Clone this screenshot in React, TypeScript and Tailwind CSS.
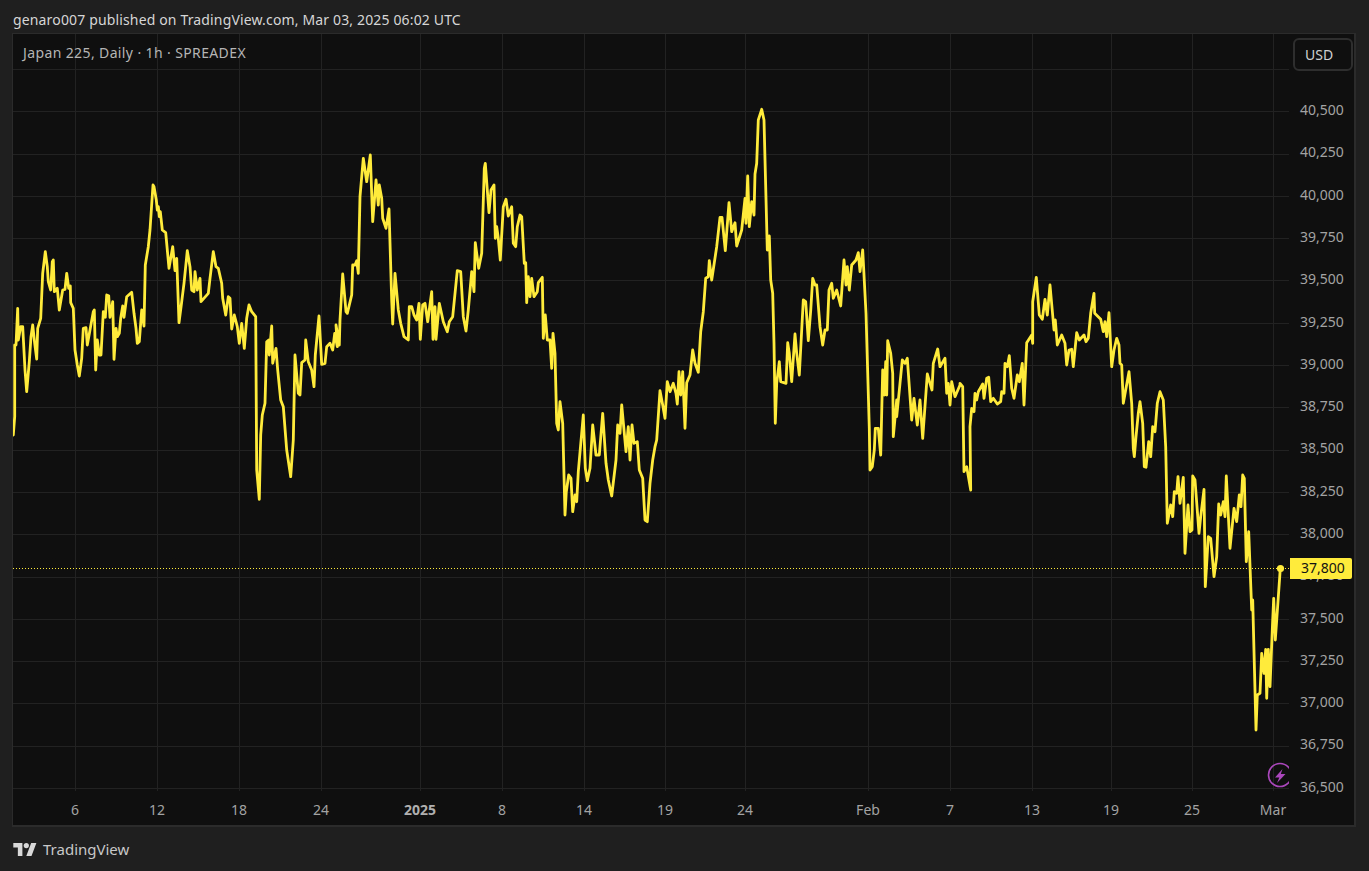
import React from "react";

type P = [number, number];
const seg = (ox: number, oy: number, pts: P[]): P[] => pts.map(([x, y]) => [ox + x / 3, oy + y / 3]);

const a: P[] = seg(0, 230, [
  [40,615],[44,560],[44,345],[48,345],[53,235],[55,330],[62,290],[68,290],[75,420],[80,485],[88,395],[93,320],[98,285],[104,340],[110,387],[113,295],[122,265],[128,130],[136,65],[142,110],[145,155],[152,180],[157,95],[160,90],[163,185],[172,175],[178,240],[188,180],[195,178],[200,130],[206,175],[211,168],[212,218],[220,235],[225,360],[232,405],[238,438],[245,385],[250,295],[258,293],[262,345],[270,300],[280,245],[283,240],[287,420],[292,330],[298,375],[303,375],[310,245],[316,262],[320,195],[326,197],[330,262],[338,215],[342,388],[348,295],[352,320],[358,310],[362,265],[368,228],[372,262],[380,200],[395,187],[402,250],[408,295],[412,340],[418,335],[425,240],[432,288],[436,105],[445,50],[450,0],
  [459,-135],[462,-130],[469,-90],[472,-60],[475,-70],[478,-40],[481,-55],[487,0],
  [497,8],[507,115],[518,50],[525,122],[530,85],[537,278],[545,215],[552,160],[562,62],[570,110],[575,180],[582,185],[585,125],[592,180],[600,145],[603,215],[625,190],[630,145],[640,65],[648,110],[655,115],[665,160],[668,205],[677,255],[685,200],[690,205],[695,297],[703,255],[712,290],[718,340],[725,280],[733,355],[740,265],[747,225],[755,245],[767,260],[770,720],[778,808],[782,615],[787,555],[795,520],[800,335],[806,330],[808,375],[815,288],[818,400],[828,355],[833,420],[842,510],[850,530],[860,660],[872,740],[880,630],[885,375],[895,490],[900,495],[905,398],[915,390],[917,330],[925,395],[935,420],[942,470],[946,375],[957,258],[965,403],[975,400],[980,350],[990,340],
]);
const b: P[] = seg(330, 140, [
  [0,610],[8,630],[14,580],[22,620],[18,555],[28,615],[30,540],[38,402],[48,515],[52,520],[65,465],[68,375],[75,375],[80,362],[85,400],[90,170],[100,55],[110,125],[121,45],[128,245],[138,120],[145,195],[148,135],[155,175],[158,235],[168,265],[177,207],[185,480],[188,552],[195,400],[205,510],[212,550],[222,590],[235,600],[238,500],[245,500],[252,525],[260,540],[267,490],[271,598],[278,495],[285,490],[293,545],[305,455],[309,598],[315,500],[318,598],[328,490],[340,545],[352,575],[358,545],[368,530],[382,392],[392,395],[400,530],[408,573],[415,510],[425,395],[432,455],[436,308],[446,385],[455,340],[463,85],[466,70],[477,218],[483,150],[492,135],[496,295],[500,260],[505,295],[511,360],[520,200],[528,178],[535,228],[545,200],[550,310],[557,320],[562,260],[570,225],[575,230],[583,370],[587,368],[590,488],[595,410],[600,470],[605,415],[612,470],[622,455],[625,428],[637,412],[640,595],[646,525],[652,600],[660,600],[665,685],[669,580],[675,640],[680,850],[685,870],[690,785],[698,850],[705,1125],[709,1055],[716,1005],[723,1015],[728,1115],[735,1065],[740,1085],[745,995],[760,825],[766,985],[772,1022],[780,985],[788,855],[798,945],[808,945],[818,820],[828,970],[835,1020],[845,1068],[858,960],[863,855],[870,880],[875,795],[888,935],[895,860],[900,960],[906,855],[912,910],[922,905],[928,990],[938,1015],[945,1140],[952,1145],
]);
const c: P[] = seg(640, 100, [
  [30,1150],[38,1080],[45,1040],[50,1020],[60,872],[68,915],[75,955],[82,845],[90,875],[100,850],[108,880],[112,912],[117,815],[122,885],[128,815],[135,985],[140,848],[150,825],[158,750],[165,790],[175,817],[182,695],[190,635],[197,535],[205,530],[208,482],[215,540],[230,440],[240,352],[246,352],[256,452],[267,308],[275,395],[285,368],[290,438],[305,390],[315,295],[318,370],[323,228],[328,380],[335,305],[342,345],[345,222],[350,190],[355,60],[365,28],[372,60],[382,450],[388,408],[392,540],[398,580],[402,730],[406,970],[410,850],[418,785],[422,845],[438,850],[443,728],[448,760],[455,845],[465,702],[470,760],[478,825],[490,600],[497,605],[505,722],[512,632],[518,535],[525,555],[530,555],[540,680],[548,735],[555,690],[562,690],[567,570],[575,550],[580,595],[590,570],[602,618],[612,480],[618,555],[622,500],[628,570],[635,495],[648,480],[655,458],[660,515],[668,450],[678,640],[688,985],[690,1110],[697,1100],[703,1050],[706,985],[715,985],[722,1065],[728,810],[733,885],[737,785],[740,885],[743,722],[752,760],[758,820],[760,1010],[770,900],[770,950],[780,850],[787,780],[795,790],[802,775],[815,960],[822,895],[832,975],[840,900],[848,1015],[862,822],[870,850],[876,870],[880,790],[893,747],[900,800],[915,775],[920,880],[925,850],[930,915],[935,845],[945,890],[960,855],
]);
const d: P[] = seg(960, 260, [
  [0,370],[8,380],[12,635],[20,620],[32,690],[30,500],[35,445],[42,455],[45,400],[50,420],[55,395],[68,372],[72,415],[80,355],[86,352],[92,425],[100,415],[112,432],[122,425],[125,395],[132,400],[135,310],[142,320],[148,287],[155,385],[162,415],[172,345],[178,365],[187,310],[192,435],[200,248],[215,225],[218,250],[218,125],[229,52],[238,165],[247,178],[255,118],[262,165],[270,75],[282,210],[286,180],[292,255],[305,225],[315,250],[320,315],[327,270],[335,268],[340,320],[350,218],[358,240],[372,225],[378,245],[385,235],[392,160],[402,100],[404,160],[422,178],[430,215],[435,185],[440,230],[447,158],[455,320],[462,270],[470,235],[477,255],[480,310],[485,315],[490,430],[507,335],[515,430],[520,565],[523,590],[528,530],[535,460],[540,425],[548,490],[553,620],[558,622],[566,545],[572,590],[578,500],[585,515],[592,430],[600,395],[610,420],[617,560],[622,790],[632,735],[638,770],[643,695],[650,700],[654,650],[660,730],[670,652],[675,880],[684,735],[690,815],[696,810],[698,648],[705,660],[717,820],[722,770],[732,688],[736,980],[745,830],[752,835],[762,950],[770,890],[776,732],[782,765],[790,725],[795,770],[799,648],[810,865],[822,745],[830,785],[838,705],[843,740],[848,645],[853,655],[859,905],[866,815],[875,1050],[878,1020],[888,1410],[892,1305],[900,1300],[905,1180],[912,1240],[917,1168],[920,1315],[925,1168],[930,1280],[938,1080],[941,1015],[946,1140],[961,925],
]);

const line = [...a, ...b, ...c, ...d].map(([x, y]) => `${x.toFixed(1)},${y.toFixed(1)}`).join(" ");

const vGrid = [75, 157, 239, 321, 420, 502, 584, 665, 745, 868, 950, 1032, 1111, 1192, 1273];
const hGrid = Array.from({ length: 18 }, (_, i) => Math.round(69 + i * 42.294));
const prices = ["40,500","40,250","40,000","39,750","39,500","39,250","39,000","38,750","38,500","38,250","38,000","37,750","37,500","37,250","37,000","36,750","36,500"];
const times: [string, number, boolean][] = [["6",75,false],["12",157,false],["18",239,false],["24",321,false],["2025",420,true],["8",502,false],["14",584,false],["19",665,false],["24",745,false],["Feb",868,false],["7",950,false],["13",1032,false],["19",1111,false],["25",1192,false],["Mar",1273,false]];

export default function App() {
  return (
    <div className="w-[1369px] h-[871px] flex flex-col bg-[#1f1f1f] overflow-hidden font-['Noto_Sans',sans-serif]">
      <div className="h-[33px] pl-[13px] pt-[6px] flex items-center text-[14px] tracking-[0.15px] text-[#d6d6d6] leading-none">
        genaro007 published on TradingView.com, Mar 03, 2025 06:02 UTC
      </div>
      <div className="ml-[12px] w-[1344px] h-[794px] border-2 border-[#2b2b2b] border-l border-t bg-[#0f0f0f] flex flex-col shrink-0">
        <div className="flex h-[757px]">
          <div className="relative w-[1276px] h-[757px] shrink-0">
            <svg className="block" width="1276" height="757" viewBox="13 34 1276 757">
              {vGrid.map((x) => (
                <line key={x} x1={x + 0.5} x2={x + 0.5} y1={34} y2={791} stroke="#222222" strokeWidth={1} />
              ))}
              {hGrid.map((y) => (
                <line key={y} x1={13} x2={1289} y1={y + 0.5} y2={y + 0.5} stroke="#222222" strokeWidth={1} />
              ))}
              <line x1={13} x2={1289} y1={568.5} y2={568.5} stroke="#ffeb3b" strokeWidth={1} strokeDasharray="1 2" />
              <polyline points={line} fill="none" stroke="#ffeb3b" strokeWidth={2.8} strokeLinejoin="round" strokeLinecap="round" />
              <circle cx={1280.5} cy={568.5} r={3.6} fill="#ffeb3b" />
              <circle cx={1280} cy={775} r={11.5} fill="none" stroke="#ab47bc" strokeWidth={1.6} />
              <path d="M1282.5 769 L1275 777.5 L1279.3 777.5 L1277 783 L1285.5 774 L1280.8 774 Z" fill="#ab47bc" />
            </svg>
            <div className="absolute left-[10px] top-[9px] text-[14px] tracking-[0.38px] leading-[20px] text-[#b5b5b5]">
              Japan 225, Daily · 1h · SPREADEX
            </div>
          </div>
          <div className="relative flex-1 flex flex-col pt-[4px] pl-[4px]">
            <div className="w-[60px] h-[33px] shrink-0 border-2 border-[#2e2e2e] rounded-[6px] flex items-center pl-[10px] text-[14px] text-[#d1d1d1]">
              USD
            </div>
            <div className="flex flex-col pl-[7px] mt-[18px]">
              {prices.map((p) => (
                <div key={p} className="h-[42.294px] flex items-center text-[14px] text-[#a3a3a3] leading-none">
                  {p}
                </div>
              ))}
            </div>
            <div className="absolute left-[1px] top-[524px] w-[62px] h-[21px] rounded-r-[2px] bg-[#ffeb3b] flex items-center pl-[11px] pb-[1px] text-[14px] text-[#131313] leading-none">
              37,800
            </div>
          </div>
        </div>
        <div className="relative flex-1">
          {times.map(([t, x, bold]) => (
            <span
              key={t + x}
              className={bold ? "absolute top-[9px] -translate-x-1/2 text-[14px] leading-[20px] font-bold text-[#b0b0b0]" : "absolute top-[9px] -translate-x-1/2 text-[14px] leading-[20px] text-[#a3a3a3]"}
              style={{ left: x - 13 }}
            >
              {t}
            </span>
          ))}
        </div>
      </div>
      <div className="flex items-center gap-[6px] pl-[13px] h-[44px]">
        <svg width="24" height="13" viewBox="0 0 36 20" className="block">
          <path d="M14 20H7V7H0V0h14v20zM28 20h-8l7.5-20h8L28 20z" fill="#d8d8d8" />
          <circle cx="20" cy="4" r="4" fill="#d8d8d8" />
        </svg>
        <span className="text-[15px] leading-none text-[#c8c8c8]">TradingView</span>
      </div>
    </div>
  );
}
